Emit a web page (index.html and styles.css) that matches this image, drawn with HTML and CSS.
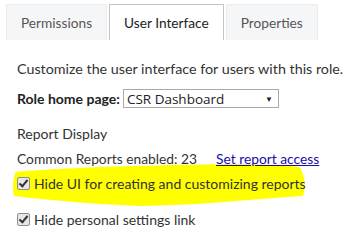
FILE: index.html
```html
<!DOCTYPE html>
<html>
<head>
    <title>Role Settings</title>
    <link rel="stylesheet" href="styles.css">
</head>
<body>
    <div class="tabs">
        <div class="tab">Permissions</div>
        <div class="tab active">User Interface</div>
        <div class="tab">Properties</div>
    </div>

    <div class="panel">
        <p class="intro">Customize the user interface for users with this role.</p>

        <div class="home-row">
            <label class="home-label">Role home page:</label>
            <div class="select">
                <span>CSR Dashboard</span>
                <span class="arrow">&#9660;</span>
            </div>
        </div>

        <p class="section">Report Display</p>

        <div class="reports-row">
            <span>Common Reports enabled: 23</span>
            <a href="#" class="access">Set report access</a>
        </div>

        <div class="check-row marked">
            <svg class="marker" viewBox="0 0 300 40" preserveAspectRatio="none">
                <path d="M4 8 C60 4 140 2 220 1 C250 1 280 2 291 4 C296 12 297 22 294 30 C240 33 180 39 130 39 C90 38 40 34 2 30 C0 22 1 14 4 8 Z" fill="#ffff00"/>
            </svg>
            <span class="box checked"></span>
            <span>Hide UI for creating and customizing reports</span>
        </div>

        <div class="check-row">
            <span class="box checked"></span>
            <span>Hide personal settings link</span>
        </div>
    </div>
</body>
</html>
```

FILE: styles.css
```css
/* Page */
body {
    margin: 0;
    font-family: Lato, "Open Sans", sans-serif;
    font-size: 14px;
    color: #333;
    background-color: #fff;
}

/* Tabs */
.tabs {
    display: flex;
    gap: 2px;
    padding: 4px 0 0 6px;
}

.tab {
    height: 35px;
    padding: 0 14px;
    display: flex;
    align-items: center;
    font-size: 13.7px;
    color: #555;
    background-color: #f5f6f8;
    border: 1px solid #ebedef;
    border-bottom: none;
}

    .tab.active {
        color: #222;
        background-color: #fff;
        border-color: #c4c4c4;
    }

/* Panel */
.panel {
    padding: 20px 0 0 17px;
}

.intro {
    margin: 0 0 12px;
    font-size: 14.3px;
}

.home-row {
    display: flex;
    align-items: center;
    gap: 3px;
}

.home-label {
    font-weight: bold;
    color: #222;
}

.select {
    width: 147px;
    height: 17px;
    padding: 0 4px 0 3px;
    border: 1px solid #a9a9a9;
    display: flex;
    justify-content: space-between;
    align-items: center;
    font-family: "Open Sans", sans-serif;
    font-size: 13.5px;
    color: #222;
}

    .select .arrow {
        font-size: 8px;
        margin-right: 1px;
    }

.section {
    margin: 17px 0 8px;
}

.reports-row {
    display: flex;
    gap: 19px;
    font-size: 13.8px;
}

.access {
    color: #1a0dab;
}

/* Checkbox rows */
.check-row {
    display: flex;
    align-items: center;
    gap: 4px;
    margin-top: 4px;
}

.marked {
    position: relative;
    height: 25px;
}

.marker {
    position: absolute;
    left: -5px;
    top: -8px;
    width: 297px;
    height: 44px;
    z-index: -1;
}

.box {
    width: 11px;
    height: 11px;
    border: 1px solid #8f8f8f;
    border-radius: 2px;
    background-color: #e6e6e6;
    position: relative;
}

    .box.checked::after {
        content: "";
        position: absolute;
        left: 3px;
        top: 0px;
        width: 3px;
        height: 7px;
        border: solid #333;
        border-width: 0 2px 2px 0;
        transform: rotate(40deg);
    }

.marked + .check-row {
    margin-top: 15px;
}
```
